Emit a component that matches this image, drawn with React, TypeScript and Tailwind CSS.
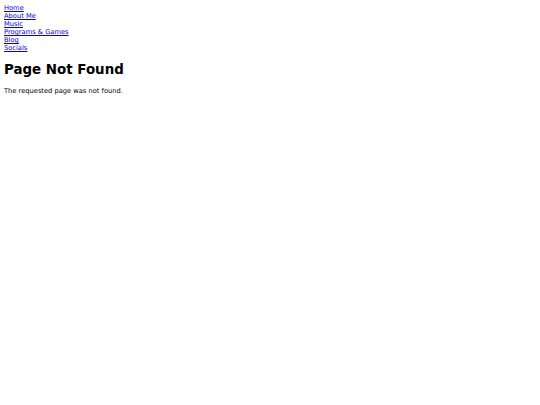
export default function App() {
  const links = ['Home', 'About Me', 'Music', 'Programs & Games', 'Blog', 'Socials'];
  return (
    <div className="min-h-[405px] bg-white p-[4px] text-black" style={{ fontFamily: '"DejaVu Sans", sans-serif' }}>
      <nav className="flex flex-col items-start text-[6.7px] leading-[8px]">
        {links.map((l) => (
          <a key={l} href="#" className="text-[#0000ee] underline">
            {l}
          </a>
        ))}
      </nav>
      <h1 className="mt-[9px] text-[13.4px] font-bold leading-[17px]">Page Not Found</h1>
      <p className="mt-[9px] text-[6.7px] leading-[8px]">The requested page was not found.</p>
    </div>
  );
}
